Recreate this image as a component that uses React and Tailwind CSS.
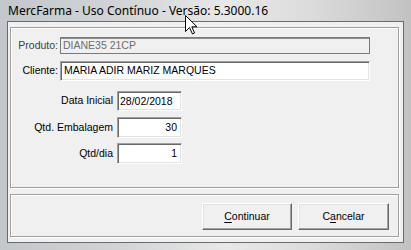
import React from "react";

const sunken =
  "border border-t-[#a0a0a0] border-l-[#a0a0a0] border-r-white border-b-white shadow-[inset_1px_1px_0_#696969,inset_-1px_-1px_0_#e3e3e3] bg-white";

function Btn({ first, rest, w }) {
  return (
    <div
      className={`${w} h-[27px] flex items-center justify-center bg-[#f0f0f0] border border-t-white border-l-white border-r-[#696969] border-b-[#696969] shadow-[inset_-1px_-1px_0_#a0a0a0,inset_1px_1px_0_#e3e3e3] text-[10.5px] text-black`}
    >
      <span>
        {first}
      </span>
    </div>
  );
}

export default function App() {
  return (
    <div
      className="relative w-[411px] h-[250px] flex flex-col overflow-hidden bg-[linear-gradient(90deg,#c3c7cb_0%,#d2d4d6_30%,#e8e8e8_55%,#dcdcdc_75%,#c2c2c2_100%)]"
      style={{ fontFamily: '"Liberation Sans", Arial, sans-serif' }}
    >
      {/* title bar */}
      <div
        className="h-[21px] flex items-center pl-[8px] text-[12px] text-black"
        style={{ fontFamily: '"Noto Sans", "Open Sans", sans-serif' }}
      >
        MercFarma - Uso Contínuo - Versão: 5.3000.16
      </div>

      {/* body */}
      <div className="flex px-[7px]">
        <div className="w-[397px] h-[222px] border border-[#6b6b6b] bg-[#f0f0f0] flex flex-col pl-[2px] pr-[4px] pt-[5px]">
          {/* group 1 */}
          <div className="h-[161px] border border-[#a0a0a0] shadow-[inset_1px_1px_0_#fff,1px_1px_0_#fff] flex flex-col pt-[9px] text-[10.5px] text-black">
            <div className="flex items-center h-[17px]">
              <div className="w-[47px] text-right text-[#404040]">Produto:</div>
              <div className="ml-[2px] w-[310px] h-[17px] border border-[#7a7a7a] shadow-[inset_0_1px_0_#8a8a8a] bg-[#f0f0f0] flex items-center pl-[2px] text-[#6d6d6d]">
                DIANE35 21CP
              </div>
            </div>
            <div className="flex items-center h-[20px] mt-[7px]">
              <div className="w-[47px] text-right">Cliente:</div>
              <div className={`ml-[2px] w-[310px] h-[20px] ${sunken} flex items-center pl-[3px]`}>
                MARIA ADIR MARIZ MARQUES
              </div>
            </div>
            <div className="flex items-center h-[20px] mt-[10px]">
              <div className="w-[102px] text-right">Data Inicial</div>
              <div className={`ml-[4px] w-[65px] h-[20px] ${sunken} flex items-start pt-[2px] pl-[2px]`}>
                28/02/2018
              </div>
            </div>
            <div className="flex items-center h-[21px] mt-[6px]">
              <div className="w-[102px] text-right">Qtd. Embalagem</div>
              <div className={`ml-[4px] w-[65px] h-[21px] ${sunken} flex items-center justify-end pr-[4px]`}>
                30
              </div>
            </div>
            <div className="flex items-center h-[21px] mt-[5px]">
              <div className="w-[102px] text-right">Qtd/dia</div>
              <div className={`ml-[4px] w-[65px] h-[21px] ${sunken} flex items-center justify-end pr-[4px]`}>
                1
              </div>
            </div>
          </div>

          {/* group 2 */}
          <div className="mt-[6px] h-[43px] border border-[#a0a0a0] shadow-[inset_1px_1px_0_#fff,1px_1px_0_#fff] flex justify-end items-start pt-[8px] pr-[9px] gap-[6px]">
            <div className="w-[90px] h-[27px] flex items-center justify-center bg-[#f0f0f0] border border-t-white border-l-white border-r-[#696969] border-b-[#696969] shadow-[inset_-1px_-1px_0_#a0a0a0,inset_1px_1px_0_#e3e3e3] text-[10.5px] text-black">
              <span>
                <span className="underline underline-offset-2">C</span>ontinuar
              </span>
            </div>
            <div className="w-[91px] h-[27px] flex items-center justify-center bg-[#f0f0f0] border border-t-white border-l-white border-r-[#696969] border-b-[#696969] shadow-[inset_-1px_-1px_0_#a0a0a0,inset_1px_1px_0_#e3e3e3] text-[10.5px] text-black">
              <span>
                C<span className="underline underline-offset-2">a</span>ncelar
              </span>
            </div>
          </div>
        </div>
      </div>

      {/* mouse cursor */}
      <svg
        className="absolute left-[185px] top-[15px]"
        width="13"
        height="20"
        viewBox="0 0 13 20"
      >
        <path
          d="M0.5 0.5 L0.5 16.5 L4.5 12.5 L7.5 19 L9.5 18 L6.8 11.8 L12 11.8 Z"
          fill="#fff"
          stroke="#000"
          strokeWidth="1"
          strokeLinejoin="miter"
        />
      </svg>
    </div>
  );
}
